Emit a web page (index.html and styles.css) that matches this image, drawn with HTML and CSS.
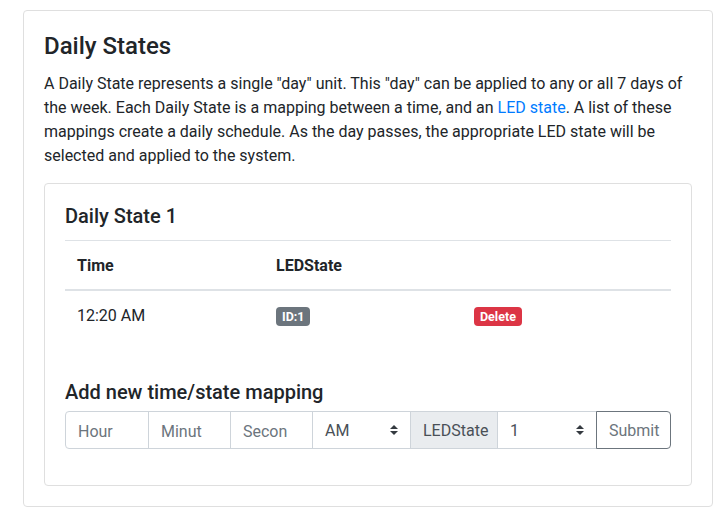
FILE: index.html
```html
<!DOCTYPE html>
<html lang="en">
<head>
<meta charset="utf-8">
<title>Daily States</title>
<link rel="stylesheet" href="styles.css">
</head>
<body>
<div class="page">
  <div class="card">
    <div class="card-body">
      <h4 class="title">Daily States</h4>
      <p class="intro">A Daily State represents a single "day" unit. This "day" can be applied to any or all 7 days of the week. Each Daily State is a mapping between a time, and an <a href="#" class="link">LED state</a>. A list of these mappings create a daily schedule. As the day passes, the appropriate LED state will be selected and applied to the system.</p>
      <div class="card">
        <div class="card-body">
          <h5 class="subtitle">Daily State 1</h5>
          <table class="table">
            <colgroup>
              <col class="col-time">
              <col class="col-state">
              <col class="col-action">
            </colgroup>
            <thead>
              <tr><th>Time</th><th>LEDState</th><th></th></tr>
            </thead>
            <tbody>
              <tr>
                <td>12:20 AM</td>
                <td><span class="badge badge-secondary">ID:1</span></td>
                <td><span class="badge badge-danger">Delete</span></td>
              </tr>
            </tbody>
          </table>
          <h5 class="subtitle add-title">Add new time/state mapping</h5>
          <form class="input-group">
            <input class="field w-hour" type="text" placeholder="Hour">
            <input class="field w-min" type="text" placeholder="Minut">
            <input class="field w-sec" type="text" placeholder="Secon">
            <div class="field select w-ampm">AM<svg class="arrows" viewBox="0 0 4 5" width="8" height="10"><path d="M2 0L0 2h4zm0 5L0 3h4z"/></svg></div>
            <div class="field addon w-label">LEDState</div>
            <div class="field select w-state">1<svg class="arrows" viewBox="0 0 4 5" width="8" height="10"><path d="M2 0L0 2h4zm0 5L0 3h4z"/></svg></div>
            <button class="submit w-submit" type="button">Submit</button>
          </form>
        </div>
      </div>
    </div>
  </div>
</div>
</body>
</html>
```
FILE: styles.css
```css
* { box-sizing: border-box; }

body {
  margin: 0;
  background: #fff;
  color: #212529;
  font-family: Roboto, "Liberation Sans", sans-serif;
  font-size: 16px;
  line-height: 24px;
}

.page {
  padding: 10px 7px 12px 23px;
}

.card {
  border: 1px solid #dfdfdf;
  border-radius: 4px;
  background: #fff;
}

.card-body {
  padding: 20px;
}

.title {
  margin: 0 0 12px;
  padding-top: 1px;
  font-size: 24px;
  font-weight: 500;
  line-height: 28px;
}

.intro {
  margin: 0 0 15px;
}

.link {
  color: #007bff;
  text-decoration: none;
}

.subtitle {
  margin: 0 0 12px;
  padding-top: 1px;
  font-size: 20px;
  font-weight: 500;
  line-height: 23px;
}

.table {
  width: 100%;
  border-collapse: collapse;
  margin-bottom: 16px;
}

.col-time { width: 199px; }
.col-state { width: 198px; }

.table th,
.table td {
  padding: 13px 12px 11px;
  text-align: left;
  vertical-align: top;
  border-top: 1px solid #dee2e6;
}

.table th {
  font-weight: 700;
  border-bottom: 2px solid #dee2e6;
}

.badge {
  display: inline-block;
  padding: 3px 6px;
  font-size: 12.5px;
  font-weight: 700;
  line-height: 13px;
  color: #fff;
  border-radius: 4px;
  vertical-align: 0;
}

.badge-secondary { background: #6c757d; }
.badge-danger { background: #dc3545; }

.add-title {
  margin: 41px 0 7px;
}

.input-group {
  display: flex;
  margin: 0 0 16px;
}

.field {
  height: 38px;
  margin: 0 0 0 -1px;
  padding: 7px 12px 5px;
  border: 1px solid #ced4da;
  background: #fff;
  color: #495057;
  font: inherit;
  line-height: 24px;
  flex: none;
}

.field:first-child {
  margin-left: 0;
  border-radius: 4px 0 0 4px;
}

.field::placeholder { color: #6c757d; opacity: 1; }

.select {
  position: relative;
  padding-right: 28px;
}

.arrows {
  position: absolute;
  right: 12px;
  top: 13px;
  fill: #343a40;
}

.addon {
  background: #e9ecef;
  text-align: center;
}

.submit {
  height: 38px;
  margin-left: -1px;
  padding: 7px 12px 5px;
  border: 1px solid #6c757d;
  border-radius: 0 4px 4px 0;
  background: #fff;
  color: #6c757d;
  font: inherit;
  line-height: 24px;
  flex: none;
  position: relative;
}

.w-hour { width: 84px; }
.w-min { width: 83px; }
.w-sec { width: 83px; }
.w-ampm { width: 99px; }
.w-label { width: 88px; }
.w-state { width: 100px; }
.w-submit { width: 75px; }
```
